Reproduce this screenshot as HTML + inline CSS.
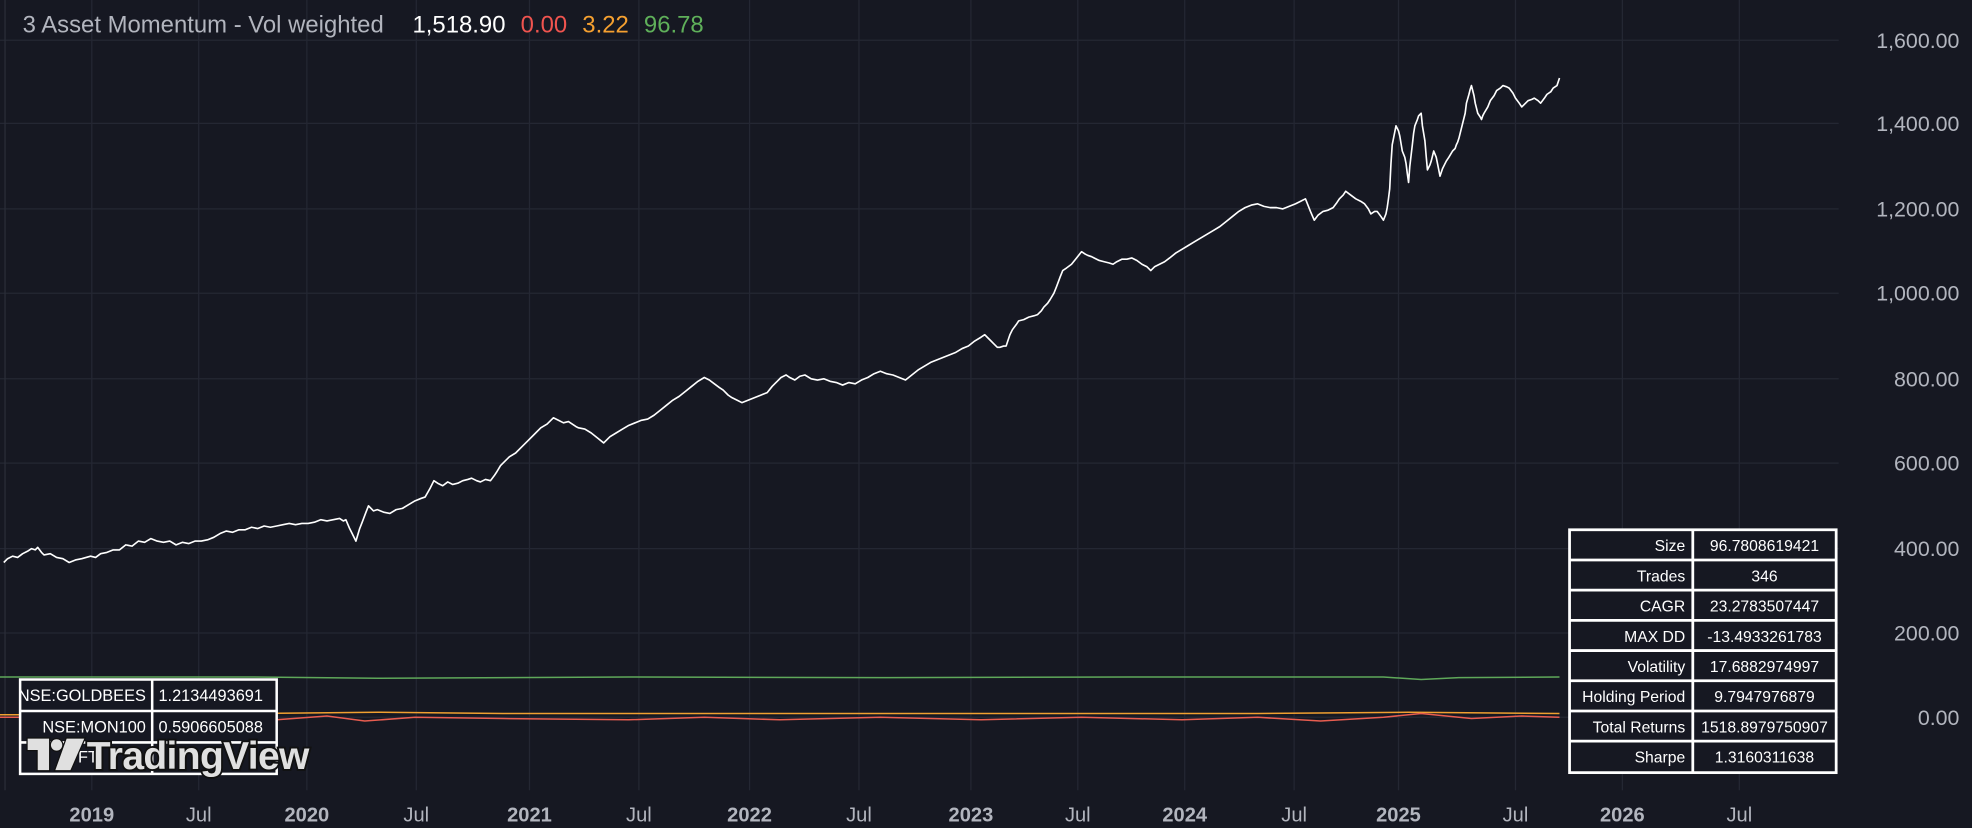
<!DOCTYPE html>
<html><head><meta charset="utf-8"><style>
html,body{margin:0;padding:0;background:#161822;}
svg{display:block}
text{font-family:"Liberation Sans",sans-serif}
</style></head><body>
<svg width="1972" height="828" viewBox="0 0 1568 658" preserveAspectRatio="none" xmlns="http://www.w3.org/2000/svg">
<rect width="1568" height="658" fill="#161822"/>
<g stroke="#242733" stroke-width="1">
<line x1="0" y1="32" x2="1462" y2="32"/><line x1="0" y1="98" x2="1462" y2="98"/><line x1="0" y1="166" x2="1462" y2="166"/><line x1="0" y1="233" x2="1462" y2="233"/><line x1="0" y1="301" x2="1462" y2="301"/><line x1="0" y1="368" x2="1462" y2="368"/><line x1="0" y1="436" x2="1462" y2="436"/><line x1="0" y1="503" x2="1462" y2="503"/><line x1="0" y1="570" x2="1462" y2="570"/>
<line x1="73" y1="0" x2="73" y2="628"/><line x1="158" y1="0" x2="158" y2="628"/><line x1="244" y1="0" x2="244" y2="628"/><line x1="331" y1="0" x2="331" y2="628"/><line x1="421" y1="0" x2="421" y2="628"/><line x1="508" y1="0" x2="508" y2="628"/><line x1="596" y1="0" x2="596" y2="628"/><line x1="683" y1="0" x2="683" y2="628"/><line x1="772" y1="0" x2="772" y2="628"/><line x1="857" y1="0" x2="857" y2="628"/><line x1="942" y1="0" x2="942" y2="628"/><line x1="1029" y1="0" x2="1029" y2="628"/><line x1="1112" y1="0" x2="1112" y2="628"/><line x1="1205" y1="0" x2="1205" y2="628"/><line x1="1290" y1="0" x2="1290" y2="628"/><line x1="1383" y1="0" x2="1383" y2="628"/>
</g>
<line x1="4" y1="0" x2="4" y2="628" stroke="#2a2d38"/>
<polyline fill="none" stroke="#5fa85a" stroke-width="1.2" points="0,538 200,538 300,539 500,538 700,538.5 900,538 1100,538 1130,540 1160,538.5 1240,538"/>
<polyline fill="none" stroke="#f0a030" stroke-width="1.2" points="0,568 40,568 50,566 100,567 200,567 300,566 400,567 600,567 800,567 1000,567 1120,566 1240,567"/>
<polyline fill="none" stroke="#e85d50" stroke-width="1.2" points="0,570 40,570 50,572 60,570 120,571 180,569 220,572 260,569 290,573 330,570 400,571 500,572 560,570 620,572 700,570 780,572 860,570 940,572 1000,570 1050,573 1100,570 1130,567 1170,571 1210,569 1240,570"/>
<polyline fill="none" stroke="#ffffff" stroke-width="1.3" stroke-linejoin="round" points="3,447 6,444 10,442 14,443 18,440 22,438 25,436 28,437 30,435 33,439 35,441 40,440 45,443 50,444 55,447 60,445 65,444 72,442 76,443 80,440 85,439 90,437 95,437 100,433 105,434 110,430 115,431 120,428 125,430 130,431 135,430 140,433 145,431 150,432 155,430 160,430 165,429 170,427 175,424 180,422 185,423 190,421 195,421 200,419 205,420 210,418 215,419 220,418 225,417 230,416 235,417 240,416 245,416 250,415 255,413 260,414 265,413 270,412 273,414 275,413 278,420 280,424 283,430 286,420 288,415 291,407 293,402 297,406 300,405 305,407 310,408 315,405 320,404 325,401 330,398 335,396 338,395 342,388 345,382 348,384 352,386 356,383 360,385 364,384 368,382 372,381 375,380 379,382 382,383 386,381 390,382 393,378 395,375 398,370 400,368 405,363 410,360 415,355 420,350 425,345 430,340 435,337 440,332 444,334 448,336 452,335 455,337 458,339 460,340 465,341 470,344 475,348 480,352 485,347 490,344 495,341 500,338 505,336 510,334 515,333 520,330 525,326 530,322 535,318 540,315 545,311 550,307 555,303 560,300 564,302 568,305 572,308 575,310 579,314 582,316 586,318 590,320 595,318 600,316 605,314 610,312 614,307 618,303 621,300 625,298 628,300 632,302 636,299 640,298 645,301 650,302 655,301 660,303 665,304 670,306 675,304 680,305 685,302 690,300 695,297 700,295 705,297 710,298 715,300 720,302 725,298 730,294 735,291 740,288 745,286 750,284 755,282 760,280 765,277 770,275 775,271 780,268 783,266 785,268 788,271 790,273 793,276 795,276 798,275 800,275 803,266 805,262 808,258 810,255 814,254 818,252 822,251 825,250 828,247 830,244 833,241 835,238 838,233 840,228 843,220 845,215 848,213 852,210 856,205 860,200 863,202 865,203 868,204 870,205 874,207 878,208 882,209 885,210 888,208 892,206 896,206 900,205 904,207 908,210 912,212 915,215 918,212 922,210 926,208 930,205 935,201 940,198 945,195 950,192 955,189 960,186 965,183 970,180 975,176 980,172 985,168 990,165 995,163 1000,162 1005,164 1010,165 1015,165 1020,166 1025,164 1030,162 1034,160 1038,158 1042,168 1045,175 1048,171 1052,168 1056,167 1060,165 1063,161 1065,158 1068,155 1070,152 1074,155 1078,158 1082,160 1085,162 1088,166 1090,170 1093,168 1095,168 1098,172 1100,175 1102,170 1103,165 1104,158 1105,150 1106,130 1107,115 1108,110 1110,100 1112,104 1113,108 1114,114 1115,120 1117,125 1118,130 1119,138 1120,145 1121,132 1123,115 1124,106 1125,100 1127,95 1128,92 1130,90 1131,100 1133,112 1134,124 1135,135 1137,131 1138,128 1139,124 1140,120 1142,125 1143,130 1144,135 1145,140 1147,134 1150,128 1152,125 1155,120 1157,118 1158,115 1159,113 1160,110 1162,102 1165,90 1166,82 1168,75 1169,71 1170,68 1172,76 1173,82 1174,86 1175,90 1177,93 1178,95 1179,92 1180,90 1183,85 1185,80 1188,76 1190,72 1193,70 1195,68 1198,69 1200,70 1203,74 1205,78 1208,82 1210,85 1213,82 1215,80 1218,79 1220,78 1223,80 1225,82 1228,78 1230,75 1233,73 1235,70 1238,68 1240,62"/>
<text x="18" y="26" font-size="19" fill="#b2b5be">3 Asset Momentum - Vol weighted</text>
<text x="328" y="26" font-size="19" fill="#ffffff">1,518.90</text>
<text x="414" y="26" font-size="19" fill="#f0544f">0.00</text>
<text x="463" y="26" font-size="19" fill="#f5a030">3.22</text>
<text x="512" y="26" font-size="19" fill="#5fb05a">96.78</text>
<g font-size="17" fill="#b2b5be" text-anchor="end">
<text x="1558" y="38">1,600.00</text><text x="1558" y="104">1,400.00</text><text x="1558" y="172">1,200.00</text><text x="1558" y="239">1,000.00</text><text x="1558" y="307">800.00</text><text x="1558" y="374">600.00</text><text x="1558" y="442">400.00</text><text x="1558" y="509">200.00</text><text x="1558" y="576">0.00</text>
</g>
<g font-size="16" fill="#b2b5be" text-anchor="middle">
<text x="73" y="653" font-weight="bold">2019</text><text x="158" y="653">Jul</text><text x="244" y="653" font-weight="bold">2020</text><text x="331" y="653">Jul</text><text x="421" y="653" font-weight="bold">2021</text><text x="508" y="653">Jul</text><text x="596" y="653" font-weight="bold">2022</text><text x="683" y="653">Jul</text><text x="772" y="653" font-weight="bold">2023</text><text x="857" y="653">Jul</text><text x="942" y="653" font-weight="bold">2024</text><text x="1029" y="653">Jul</text><text x="1112" y="653" font-weight="bold">2025</text><text x="1205" y="653">Jul</text><text x="1290" y="653" font-weight="bold">2026</text><text x="1383" y="653">Jul</text>
</g>
<g stroke="#ffffff" stroke-width="2" fill="#161822">
<rect x="16" y="540" width="204" height="75"/>
<line x1="16" y1="565" x2="220" y2="565"/><line x1="16" y1="590" x2="220" y2="590"/><line x1="121" y1="540" x2="121" y2="615"/>
</g>
<g font-size="13" fill="#ffffff">
<text x="116" y="557" text-anchor="end">NSE:GOLDBEES</text><text x="126" y="557">1.2134493691</text>
<text x="116" y="582" text-anchor="end">NSE:MON100</text><text x="126" y="582">0.5906605088</text>
<text x="30" y="606">r</text><text x="62" y="606">FT</text>
</g>
<g>
<g fill="#e0e0e0" stroke="#111" stroke-width="2" paint-order="stroke">
<path d="M22,587 h17 v25 h-9 v-16 h-8 z"/>
<circle cx="45" cy="592" r="4.5"/>
<path d="M53,587 h14 l-11,25 h-12 z"/>
</g>
<text x="69" y="611" font-size="31" font-weight="bold" fill="#e0e0e0" stroke="#111" stroke-width="3" paint-order="stroke" letter-spacing="-0.5">TradingView</text>
</g>
<g stroke="#ffffff" stroke-width="2.2" fill="#161822">
<rect x="1248" y="421" width="212" height="193"/>
<line x1="1248" y1="445" x2="1460" y2="445"/><line x1="1248" y1="469" x2="1460" y2="469"/><line x1="1248" y1="493" x2="1460" y2="493"/><line x1="1248" y1="517" x2="1460" y2="517"/><line x1="1248" y1="541" x2="1460" y2="541"/><line x1="1248" y1="565" x2="1460" y2="565"/><line x1="1248" y1="589" x2="1460" y2="589"/>
<line x1="1346" y1="421" x2="1346" y2="614"/>
</g>
<g font-size="12.5" fill="#ffffff">
<g text-anchor="end">
<text x="1340" y="438">Size</text><text x="1340" y="462">Trades</text><text x="1340" y="486">CAGR</text><text x="1340" y="510">MAX DD</text><text x="1340" y="534">Volatility</text><text x="1340" y="558">Holding Period</text><text x="1340" y="582">Total Returns</text><text x="1340" y="606">Sharpe</text>
</g>
<g text-anchor="middle">
<text x="1403" y="438">96.7808619421</text><text x="1403" y="462">346</text><text x="1403" y="486">23.2783507447</text><text x="1403" y="510">-13.4933261783</text><text x="1403" y="534">17.6882974997</text><text x="1403" y="558">9.7947976879</text><text x="1403" y="582">1518.8979750907</text><text x="1403" y="606">1.3160311638</text>
</g>
</g>
</svg>
</body></html>
